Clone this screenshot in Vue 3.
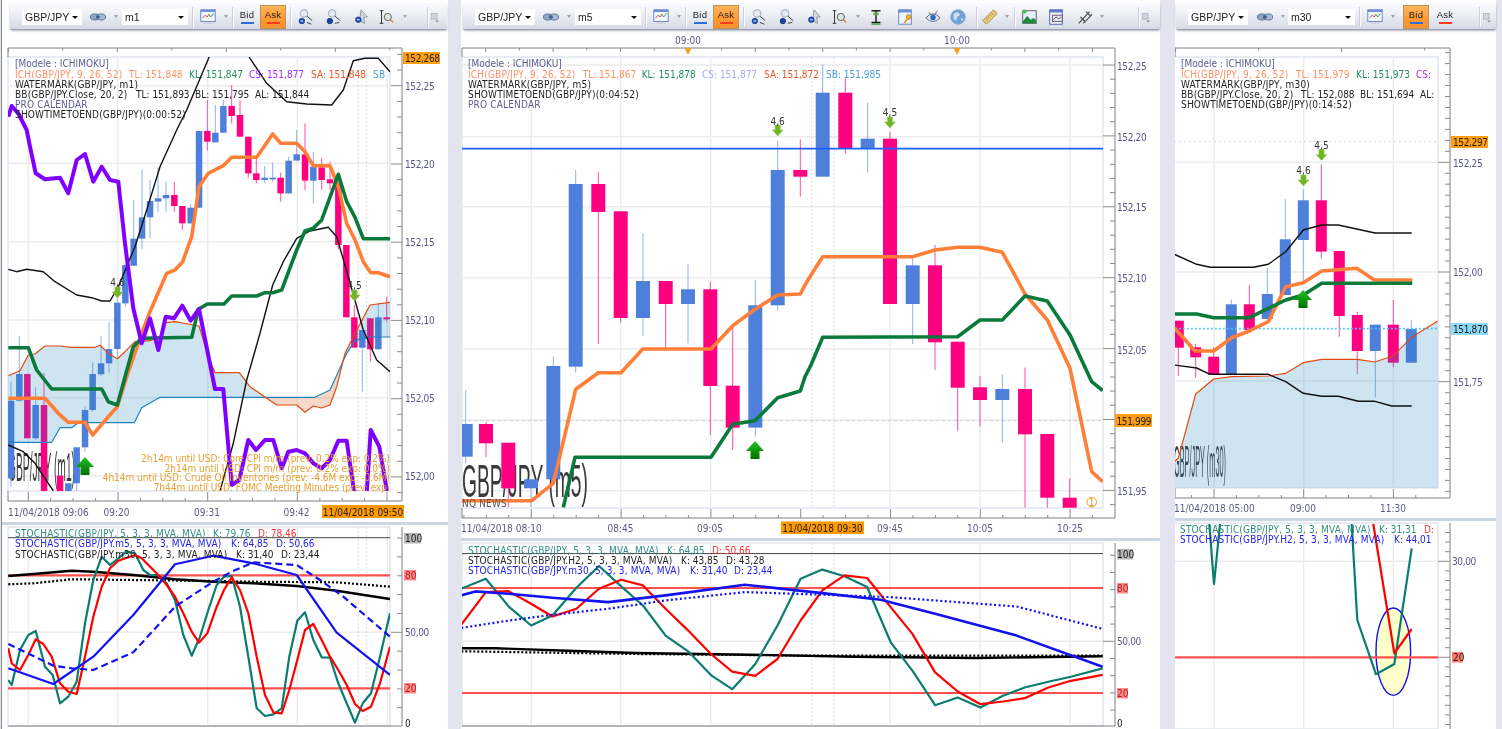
<script setup>
const parse = (s) => s.trim().split(/\s+/).map((t) => t.split(',').map(Number))
const Z = (ox, oy, sx = 3, sy = 3) => (s) => parse(s).map(([x, y]) => [ox + x / sx, oy + y / sy])
const pts = (l) => l.map((p) => p.map((n) => +n.toFixed(1)).join(',')).join(' ')
const z4 = Z(0, 130), z5 = Z(0, 500), z6 = Z(455, 500, 2.208, 2.987), z7 = Z(1160, 500), z8 = Z(1165, 130), z9 = Z(455, 100), z10 = Z(800, 40)

const candles = (list, ox, oy, bw) =>
  list.map(([x, wt, wb, bt, bb, c]) => {
    const cx = ox + x / 3
    return {
      x: +cx.toFixed(1), w1: +(oy + wt / 3).toFixed(1), w2: +(oy + wb / 3).toFixed(1),
      bx: +(cx - bw / 2).toFixed(1), by: +(oy + bt / 3).toFixed(1), bw, bh: +((bb - bt) / 3).toFixed(1),
      fill: c === 'b' ? '#4e7fdb' : '#ff0080', wick: c === 'b' ? '#8fb1ea' : '#ff4aa6',
    }
  })

function yTicks(majors, step, top, bottom, plotR, r) {
  let d = ''
  const m0 = majors[0]
  for (let y = m0 - Math.floor((m0 - top) / step) * step; y <= bottom; y += step) {
    const major = majors.some((m) => Math.abs(m - y) < step / 3)
    d += `M${major ? plotR : r - 5} ${y.toFixed(1)}H${r}`
  }
  return d
}
function xTicks(major0, step, every, l, r, y, majorH = 9, minorH = 3) {
  let d = ''
  const k0 = Math.ceil((l - major0) / step)
  for (let k = k0; major0 + k * step <= r; k++) {
    const x = major0 + k * step
    const mj = ((k % every) + every) % every === 0
    d += `M${x.toFixed(1)} ${y}v${mj ? -majorH : -minorH}`
  }
  return d
}
function topTicks(major0, step, l, r, y) {
  let d = ''
  const k0 = Math.ceil((l - major0) / step)
  for (let k = k0; major0 + k * step <= r; k++) {
    const mj = ((k % 2) + 2) % 2 === 0
    d += `M${(major0 + k * step).toFixed(1)} ${y}v${mj ? 4 : 2.5}`
  }
  return d
}
const hPath = (ys, l, r) => ys.map((y) => `M${l} ${y}H${r}`).join('')
const vPath = (xs, t, b) => xs.map((x) => `M${x} ${t}V${b}`).join('')

const AX = '#5a5a88', O = '#ff9166', G = '#1f8f60', PU = '#9b30ff', R = '#e8582c', B = '#4aa0dc', K = '#222', V = '#5c5c92'
const TE = '#2f8f85', RD = '#ff3030', BL = '#2222ee'

const kind = (t) => (/^\d+h/.test(t) ? 'cal' : /^\d{2,3},\d+$/.test(t) ? 'num' : t.includes('(') || /^[A-Z ]+$/.test(t) ? 'up' : '')
const lab = (x, y, t, c = AX, a = 'start') => ({ x, y, t, c, a, s: kind(t) })

/* ---------- left pane ---------- */
const aCandles = candles([
  [33,755,1070,812,1045,'b'],[58,618,815,732,812,'b'],[82,732,925,732,925,'p'],[107,772,930,825,925,'b'],[132,730,1083,825,1083,'p'],
  [180,1037,1083,1037,1083,'p'],[205,1060,1083,1060,1083,'b'],[230,952,1083,952,1060,'b'],[255,828,965,840,952,'b'],[278,697,845,732,840,'b'],
  [303,617,738,700,733,'b'],[327,577,727,657,700,'b'],[352,470,680,518,657,'b'],[376,400,532,405,520,'b'],[401,210,407,326,407,'b'],
  [426,118,358,262,326,'b'],[450,150,325,213,262,'b'],[474,112,245,205,215,'b'],[498,155,245,195,205,'b'],[523,155,245,195,228,'p'],
  [547,228,300,228,280,'p'],[572,222,280,233,280,'b'],[597,3,233,3,233,'b'],[622,-90,62,3,35,'p'],[646,-75,37,8,37,'b'],[670,-90,8,-72,8,'b'],
  [695,-135,-20,-72,-42,'p'],[720,-90,20,-45,20,'p'],[745,20,143,20,130,'p'],[769,85,160,130,150,'p'],[794,108,160,143,150,'b'],[818,98,155,143,148,'b'],
  [842,128,215,143,190,'p'],[866,80,190,92,190,'b'],[890,0,92,73,92,'b'],[915,-20,180,73,152,'p'],[940,65,220,110,152,'b'],[965,85,180,112,150,'p'],
  [990,95,180,148,160,'p'],[1015,150,358,160,345,'p'],[1039,345,562,345,562,'p'],[1063,525,653,562,653,'p'],[1087,600,785,600,653,'b'],
  [1111,565,695,565,658,'p'],[1135,518,658,562,658,'b'],[1160,500,575,562,568,'p'],
], 0, 130, 6.5)

const aSA = '25,737 60,722 85,675 105,672 135,648 180,648 215,652 285,652 300,646 325,670 352,686 375,665 405,635 450,632 480,620 497,578 525,575 597,588 625,680 645,728 718,728 750,770 800,805 830,825 890,825 915,847 940,828 965,834 990,825 1010,770 1035,670 1060,620 1110,525 1170,517'
const aSB = '25,937 155,937 180,893 215,893 235,878 403,878 425,833 480,802 945,802 990,780 1040,670 1065,632 1110,621 1170,621'

const aMain = {
  vb: '2 30 446 492', cls: 'main', plot: { l: 8, t: 57, r: 390, b: 491 },
  grid: hPath([85.7, 163.3, 241.7, 320, 397.7, 476], 8, 390) + vPath([28.3, 117.7, 207.7, 297.3, 387.3], 57, 491),
  dash: vPath([358.3, 366.7], 57, 491),
  frame: 'M8 57V48H402V501H8V491',
  ticks: yTicks([85.7, 163.3, 241.7, 320, 397.7, 476], 15.65, 52, 498, 391, 402) + xTicks(28.3, 22.42, 4, 8, 402, 501) + topTicks(117.3, 54.5, 8, 402, 48),
  wm: { x: 8, y: 481, w: 67, fs: 40, t: 'GBP/JPY (m1)' },
  candles: aCandles,
  cloud: [
    { pts: pts([...z4(aSA), ...z4(aSB).reverse()]), fill: 'rgba(30,130,190,.22)', clip: 'M0 0H265V729H0ZM340 0H500V729H340Z' },
    { pts: pts([...z4(aSA), ...z4(aSB).reverse()]), fill: 'rgba(220,100,40,.25)', clip: 'M265 0H340V729H265Z' },
  ],
  lines: [
    { p: z4(aSB), c: '#1b85c2', w: 1.2 }, { p: z4(aSA), c: '#e34a10', w: 1.2 },
    { p: z4('25,418 50,425 80,418 130,425 165,455 230,495 275,503 305,513 330,513 355,470 405,350 440,240 480,110 530,0 560,-60 630,-225'), c: '#111', w: 1.4 },
    { p: z4('745,-225 750,-215 800,-140 860,-85 920,-78 995,-75 1030,-120 1060,-208 1095,-215 1135,-215 1170,-175'), c: '#111', w: 1.4 },
    { p: z4('25,945 70,965 105,1000 160,1083'), c: '#111', w: 1.4 },
    { p: z4('660,1083 700,940 740,750 780,610 818,465 850,395 890,325 930,303 985,292 1010,320 1045,440 1090,600 1130,690 1170,725'), c: '#111', w: 1.4 },
    { p: z4('25,805 135,805 175,850 205,877 255,877 278,915 325,860 352,830 380,740 425,610 450,545 500,430 525,420 548,395 575,320 597,170 625,130 670,107 695,82 770,82 818,12 842,40 890,40 915,65 940,107 990,107 1015,170 1040,280 1065,330 1090,395 1112,428 1135,428 1170,440'), c: '#ff7f38', w: 3.6 },
    { p: z4('25,653 85,653 110,720 155,777 305,777 325,815 352,825 400,650 425,625 575,622 595,538 622,522 672,522 695,498 770,498 795,488 818,488 845,480 890,360 915,303 940,295 965,270 1015,133 1040,215 1065,262 1090,326 1170,326'), c: '#0a7a3a', w: 3.6 },
    { p: z4('25,-40 35,-72 55,-50 80,0 90,50 107,130 135,148 180,143 205,190 230,90 255,72 280,155 305,110 330,150 355,155 375,340 400,535 425,640 450,565 475,660 497,560 522,565 547,527 572,572 597,537 645,777 670,777 695,1065 718,1050 745,930 768,960 795,930 820,930 845,1015 865,965 890,960 915,970 940,1000 965,1015 990,990 1015,932 1040,932 1063,1090'), c: '#8000ff', w: 4 },
    { p: z4('1100,1090 1112,900 1138,950 1162,1090'), c: '#8000ff', w: 4 },
  ],
  bigArrows: [[85, 457]],
  smallArrows: [[117.5, 287], [354.5, 290]],
  boxes: [
    { x: 403, y: 52, w: 37, h: 12, fill: '#ff9f10' },
    { x: 322, y: 505, w: 82, h: 13, fill: '#ff9900' },
  ],
  texts: [
    lab(15, 63.5, '[Modele : ICHIMOKU]', V),
    lab(15, 74, 'ICH(GBP/JPY, 9, 26, 52)', O), lab(129, 74, 'TL: 151,848', O), lab(189, 74, 'KL: 151,847', G), lab(249, 74, 'CS: 151,877', PU), lab(311, 74, 'SA: 151,848', R), lab(373, 74, 'SB', B),
    lab(15, 84, 'WATERMARK(GBP/JPY, m1)', K),
    lab(15, 94, 'BB(GBP/JPY.Close, 20, 2)', K), lab(136, 94, 'TL: 151,893', K), lab(195, 94, 'BL: 151,795', K), lab(255, 94, 'AL: 151,844', K),
    lab(15, 104, 'PRO CALENDAR', V),
    lab(15, 114, 'SHOWTIMETOEND(GBP/JPY)(0:00:52)', K),
    lab(117.5, 282.5, '4,6', '#333', 'middle'), lab(354.5, 285.5, '4,5', '#333', 'middle'),
    lab(390, 458.5, '2h14m until USD: Core CPI m/m (prev: 0.2% exp: 0.2%)', '#e8a030', 'end'),
    lab(390, 468, '2h14m until USD: CPI m/m (prev: 0.2% exp: 0.0%)', '#e8a030', 'end'),
    lab(390, 477.5, '4h14m until USD: Crude Oil Inventories (prev: -4.6M exp: -0.6M)', '#e8a030', 'end'),
    lab(390, 487, '7h44m until USD: FOMC Meeting Minutes (prev: exp:', '#e8a030', 'end'),
    lab(405, 58, '152,268', '#222'), lab(405, 86, '152,25'), lab(405, 164, '152,20'), lab(405, 242, '152,15'), lab(405, 320.5, '152,10'), lab(405, 398, '152,05'), lab(405, 476, '152,00'),
    lab(8, 512, '11/04/2018 09:06'), lab(116.5, 512, '09:20', AX, 'middle'), lab(207, 512, '09:31', AX, 'middle'), lab(296.5, 512, '09:42', AX, 'middle'),
    lab(363, 512, '11/04/2018 09:50', '#222', 'middle'),
  ],
}

const aSub = {
  vb: '2 525 446 204', cls: 'sub', plot: { l: 8, t: 527, r: 390, b: 726 },
  grid: hPath([632.3], 8, 390) + vPath([28.3, 117.7, 207.7, 297.3, 387.3], 527, 726),
  dash: vPath([358.3, 366.7], 527, 726),
  frame: 'M402 527V726M8 726H402',
  ticks: yTicks([632.3], 18.85, 530, 726, 391, 402),
  hl: [
    { y: 537.7, c: '#444', w: 1 }, { y: 575.3, c: '#ff5050', w: 2.2 }, { y: 688.3, c: '#ff5050', w: 2.2 },
  ],
  lines: [
    { p: z5('25,228 100,222 215,212 280,215 400,225 525,238 640,245 760,250 890,258 1010,272 1170,297'), c: '#000', w: 2.4 },
    { p: z5('25,253 100,250 215,238 400,240 640,243 760,245 1010,247 1170,260'), c: '#000', w: 2.2, dash: '2 2' },
    { p: z5('25,540 35,555 60,450 85,405 107,393 135,500 158,525 180,610 205,590 230,545 255,370 280,240 305,170 330,195 355,175 378,155 405,160 430,210 450,225 475,225 500,250 525,300 550,405 575,467 600,410 625,330 650,255 672,230 695,228 720,320 745,470 770,625 795,648 820,643 845,625 868,470 892,362 915,337 940,420 965,472 990,473 1015,550 1040,610 1065,668 1088,610 1113,580 1140,470 1170,340'), c: '#0b7d70', w: 2.2 },
    { p: z5('25,445 35,490 60,510 85,465 107,418 130,432 155,470 180,550 205,575 230,582 255,470 280,350 305,260 330,205 355,182 405,165 425,175 475,225 500,255 525,290 550,340 575,395 597,428 622,400 650,320 672,270 695,232 720,270 745,340 770,470 795,585 820,637 845,640 868,570 892,480 915,390 940,372 965,420 990,470 1015,510 1040,555 1065,612 1088,633 1113,620 1140,550 1170,440'), c: '#ff0000', w: 2.2 },
    { p: z5('25,505 160,552 280,470 400,345 525,193 640,167 760,190 890,225 1010,398 1170,525'), c: '#1212f0', w: 2.2 },
    { p: z5('25,432 160,497 215,505 280,510 400,457 525,320 640,245 695,215 760,187 890,195 960,240 1030,290 1170,410'), c: '#1212f0', w: 2.2, dash: '7 4' },
  ],
  boxes: [
    { x: 404, y: 533, w: 17, h: 10.5, fill: '#b5b5b5' },
    { x: 404, y: 570, w: 12, h: 10.5, fill: '#ff8a8a' },
    { x: 404, y: 683, w: 12, h: 10.5, fill: '#ff8a8a' },
  ],
  texts: [
    lab(15, 533, 'STOCHASTIC(GBP/JPY, 5, 3, 3, MVA, MVA)', TE), lab(213, 533, 'K: 79,76', TE), lab(258, 533, 'D: 78,46', RD),
    lab(15, 543.7, 'STOCHASTIC(GBP/JPY.m5, 5, 3, 3, MVA, MVA)', BL), lab(231, 543.7, 'K: 64,85', BL), lab(276, 543.7, 'D: 50,66', BL),
    lab(15, 554, 'STOCHASTIC(GBP/JPY.m30, 5, 3, 3, MVA, MVA)', K), lab(236, 554, 'K: 31,40', K), lab(281, 554, 'D: 23,44', K),
    lab(405, 538, '100', '#222'), lab(405, 575.5, '80', '#b02020'), lab(405, 632.5, '50,00'), lab(405, 688.5, '20', '#b02020'), lab(405, 723, '0', '#222'),
  ],
}

/* ---------- middle pane ---------- */
const bCandles = [
  ...candles([
    [32,870,1090,972,1070,'b'],[93,965,1072,972,1030,'p'],[160,1028,1222,1028,1165,'p'],[228,1138,1222,1138,1165,'b'],[295,770,1138,798,1138,'b'],
    [362,210,818,252,800,'b'],[430,216,732,252,336,'p'],[497,334,668,334,654,'p'],[564,400,708,543,654,'b'],[632,543,745,543,612,'p'],
    [699,493,730,568,612,'b'],[766,545,1005,568,858,'p'],[833,680,1050,857,983,'p'],[901,540,1010,616,983,'b'],[968,122,632,210,616,'b'],[1036,118,290,210,230,'p'],
  ], 455, 100, 14),
  ...candles([
    [68,72,410,158,410,'b'],[136,115,342,158,325,'p'],[203,188,398,296,325,'b'],[270,275,792,296,792,'p'],[338,655,912,676,792,'b'],[405,615,990,676,907,'p'],
    [473,905,1172,905,1043,'p'],[540,1008,1160,1042,1080,'p'],[607,1003,1208,1047,1080,'b'],[675,983,1403,1047,1183,'p'],[742,1182,1403,1182,1373,'p'],[809,1316,1403,1373,1403,'p'],
  ], 800, 40, 14),
]
const bGridY = [65, 136.7, 206.7, 277.7, 349, 420, 490.7]
const bGridX = [531.3, 620.7, 710.7, 890, 980, 1070]
const bMain = {
  vb: '461 30 699 508', cls: 'main', plot: { l: 462, t: 57, r: 1103, b: 508 },
  grid: hPath(bGridY, 462, 1103) + vPath(bGridX, 57, 508),
  dash: vPath([811.7, 834], 57, 508),
  frame: 'M462 57V48H1115V518H462V508',
  ticks: yTicks(bGridY, 14.18, 52, 515, 1103, 1115) + xTicks(531.3, 22.45, 4, 462, 1103, 518) + topTicks(485.7, 33.7, 462, 1115, 48),
  hl: [{ y: 420.7, c: '#cfcfcf', w: 1, dash: '3 3' }],
  wm: { x: 462, y: 497, w: 126, fs: 46, t: 'GBP/JPY (m5)' },
  candles: bCandles,
  lines: [
    { p: [[462, 148.7], [1103, 148.7]], c: '#1f5fff', w: 1.8 },
    { p: [...z9('20,1202 230,1202 295,1150 362,868 430,818 498,818 563,747 768,747 833,677 900,628 968,585 1036,582 1050,555'), ...z10('33,705 68,650 338,650 405,630 473,622 540,622 607,637 675,762 742,840 810,985 875,1295 908,1325')], c: '#ff7f38', w: 3.6 },
    { p: [...z9('325,1222 360,1072 768,1072 833,973 900,962 968,893 1036,873 1050,830'), ...z10('33,975 68,892 473,890 540,840 607,840 675,768 742,783 810,885 875,1025 908,1052')], c: '#0a7a3a', w: 3.6 },
  ],
  bigArrows: [[755, 441]],
  smallArrows: [[777.7, 125], [890, 117]],
  tris: [688, 957],
  circle: { x: 1091.7, y: 502 },
  boxes: [
    { x: 1115, y: 414, w: 37, h: 13, fill: '#ff9f10' },
    { x: 781, y: 521.5, w: 83, h: 12.5, fill: '#ff9900' },
  ],
  texts: [
    lab(688, 40, '09:00', AX, 'middle'), lab(957, 40, '10:00', AX, 'middle'),
    lab(468, 63.5, '[Modele : ICHIMOKU]', V),
    lab(468, 74, 'ICH(GBP/JPY, 9, 26, 52)', O), lab(582.7, 74, 'TL: 151,867', O), lab(641.7, 74, 'KL: 151,878', G), lab(702, 74, 'CS: 151,877', '#a9a9f5'), lab(764, 74, 'SA: 151,872', R), lab(826, 74, 'SB: 151,985', B),
    lab(468, 84, 'WATERMARK(GBP/JPY, m5)', K),
    lab(468, 94, 'SHOWTIMETOEND(GBP/JPY)(0:04:52)', K),
    lab(468, 104, 'PRO CALENDAR', V),
    lab(777.7, 121.5, '4,6', '#333', 'middle'), lab(890, 112, '4,5', '#333', 'middle'),
    lab(462, 503, 'NQ NEWS', '#555'),
    lab(1117, 66, '152,25'), lab(1117, 137, '152,20'), lab(1117, 207.5, '152,15'), lab(1117, 278.5, '152,10'), lab(1117, 350, '152,05'), lab(1116.5, 421, '151,999', '#222'), lab(1117, 491, '151,95'),
    lab(461, 528, '11/04/2018 08:10'), lab(620.5, 528, '08:45', AX, 'middle'), lab(710, 528, '09:05', AX, 'middle'), lab(822.5, 528, '11/04/2018 09:30', '#222', 'middle'), lab(890, 528, '09:45', AX, 'middle'), lab(980, 528, '10:05', AX, 'middle'), lab(1070, 528, '10:25', AX, 'middle'),
  ],
}
const bSub = {
  vb: '461 541 699 188', cls: 'sub', plot: { l: 462, t: 543, r: 1103, b: 726 },
  grid: hPath([641.3], 462, 1103) + vPath(bGridX, 543, 726),
  dash: vPath([811.7, 834], 543, 726),
  frame: 'M1115 543V726M462 726H1115',
  ticks: yTicks([641.3], 17.2, 546, 726, 1103, 1115),
  hl: [{ y: 553.6, c: '#444', w: 1 }, { y: 588, c: '#ff5050', w: 2.2 }, { y: 693, c: '#ff5050', w: 2.2 }],
  lines: [
    { p: z6('14,443 90,443 250,450 400,457 650,462 880,468 1150,472 1430,467'), c: '#000', w: 2.4 },
    { p: z6('14,452 400,460 800,465 1430,465'), c: '#000', w: 2.2, dash: '2 2' },
    { p: z6('14,265 68,235 120,320 168,375 215,345 268,262 318,197 367,258 415,315 465,405 515,452 565,523 612,565 663,490 712,375 763,235 811,208 860,228 910,260 962,425 1010,510 1060,613 1110,590 1160,620 1210,585 1258,560 1310,543 1360,528 1430,503'), c: '#0b7d70', w: 2.2 },
    { p: z6('14,372 68,275 118,272 168,310 215,348 268,325 318,265 367,238 415,255 465,325 515,390 565,460 612,513 663,525 712,475 763,360 811,270 860,225 910,233 962,320 1010,400 1060,515 1110,572 1160,610 1210,602 1258,592 1310,560 1360,540 1430,522'), c: '#ff0000', w: 2.2 },
    { p: z6('14,382 120,360 215,343 338,325 465,300 640,275 811,283 960,290 1240,318 1430,385'), c: '#1212f0', w: 2.2, dash: '2 2.5' },
    { p: z6('14,285 45,273 118,280 215,292 338,305 465,285 640,253 811,278 940,298 1060,340 1240,405 1430,498'), c: '#1212f0', w: 2.6 },
  ],
  boxes: [
    { x: 1117, y: 549, w: 16, h: 10.5, fill: '#b5b5b5' },
    { x: 1117, y: 583, w: 11, h: 10.5, fill: '#ff8a8a' },
    { x: 1117, y: 688, w: 11, h: 10.5, fill: '#ff8a8a' },
  ],
  texts: [
    lab(468, 550, 'STOCHASTIC(GBP/JPY, 5, 3, 3, MVA, MVA)', TE), lab(667, 550, 'K: 64,85', TE), lab(712, 550, 'D: 50,66', RD),
    lab(468, 560, 'STOCHASTIC(GBP/JPY.H2, 5, 3, 3, MVA, MVA)', K), lab(681, 560, 'K: 43,85', K), lab(726, 560, 'D: 43,28', K),
    lab(468, 570, 'STOCHASTIC(GBP/JPY.m30, 5, 3, 3, MVA, MVA)', BL), lab(690, 570, 'K: 31,40', BL), lab(734, 570, 'D: 23,44', BL),
    lab(1117, 554, '100', '#222'), lab(1117, 588.5, '80', '#b02020'), lab(1117, 641.5, '50,00'), lab(1117, 693.5, '20', '#b02020'), lab(1117, 723, '0', '#222'),
  ],
}

/* ---------- right pane ---------- */
const cSA = '28,995 40,985 92,792 146,747 200,740 310,738 362,730 415,698 470,688 577,688 630,696 685,677 740,622 818,573'
const cGridY = [162.3, 272, 381]
const cGridX = [1214, 1303.7, 1393.3]
const cMain = {
  vb: '1175 30 321 488', cls: 'main', plot: { l: 1174, t: 57, r: 1438, b: 488 },
  grid: hPath(cGridY, 1174, 1438) + vPath(cGridX, 57, 488),
  frame: 'M1175 57V48H1450V498H1175V488',
  ticks: yTicks(cGridY, 10.97, 52, 495, 1438, 1450) + xTicks(1214, 22.42, 4, 1174, 1438, 498) + topTicks(1341.6, 83, 1175, 1450, 48),
  hl: [{ y: 141.7, c: '#d8d8d8', w: 1, dash: '2 3' }],
  wm: { x: 1174, y: 477, w: 52, fs: 44, t: 'GBP/JPY (m30)' },
  candles: candles([
    [40,572,738,572,653,'p'],[92,642,743,652,682,'p'],[146,652,735,680,735,'p'],[199,508,735,523,735,'b'],[253,465,600,523,600,'p'],[307,413,567,492,567,'b'],
    [361,208,495,328,495,'b'],[415,178,455,211,330,'b'],[469,103,386,211,365,'p'],[523,363,620,363,558,'p'],[577,545,732,555,663,'p'],[631,584,802,584,663,'b'],[685,510,712,584,698,'p'],[739,570,698,597,698,'b'],
  ], 1165, 130, 11),
  cloud: [{ pts: pts([...z8(cSA), ...z8('818,1073 28,1073')]), fill: 'rgba(30,130,190,.22)' }],
  lines: [
    { p: [[1175, 328.7], [1438, 328.7]], c: '#4fc3ff', w: 1.8, dash: '1.8 2.2' },
    { p: z8(cSA), c: '#e34a10', w: 1.2 },
    { p: z8('28,373 95,403 135,412 265,412 310,403 362,365 415,300 470,285 520,285 630,309 740,309'), c: '#111', w: 1.4 },
    { p: z8('28,705 95,714 135,733 310,733 362,755 415,790 470,799 520,799 580,814 630,814 680,828 740,828'), c: '#111', w: 1.4 },
    { p: z8('28,593 90,663 146,663 200,623 253,603 310,575 362,470 415,458 470,423 575,415 628,450 742,450'), c: '#ff7f38', w: 3.6 },
    { p: z8('28,552 95,552 146,563 253,563 310,535 362,510 415,495 470,460 742,460'), c: '#0a7a3a', w: 3.6 },
  ],
  bigArrows: [[1303, 290]],
  smallArrows: [[1303.5, 175], [1321.5, 149.5]],
  boxes: [
    { x: 1451, y: 136, w: 37, h: 12, fill: '#ff9f10' },
    { x: 1451, y: 323, w: 37, h: 12, fill: '#8edbff' },
  ],
  texts: [
    lab(1181, 63.5, '[Modele : ICHIMOKU]', V),
    lab(1181, 74, 'ICH(GBP/JPY, 9, 26, 52)', O), lab(1296, 74, 'TL: 151,979', O), lab(1356, 74, 'KL: 151,973', G), lab(1416, 74, 'CS:', PU),
    lab(1181, 84, 'WATERMARK(GBP/JPY, m30)', K),
    lab(1181, 94, 'BB(GBP/JPY.Close, 20, 2)', K), lab(1301, 94, 'TL: 152,088', K), lab(1360, 94, 'BL: 151,694', K), lab(1420, 94, 'AL:', K),
    lab(1181, 104, 'SHOWTIMETOEND(GBP/JPY)(0:14:52)', K),
    lab(1303.5, 170, '4,6', '#333', 'middle'), lab(1321.5, 145, '4,5', '#333', 'middle'),
    lab(1453, 142, '152,297', '#222'), lab(1453, 163, '152,25'), lab(1453, 272.5, '152,00'), lab(1453, 329, '151,870', '#222'), lab(1453, 382, '151,75'),
    lab(1174, 508, '11/04/2018 05:00'), lab(1303, 508, '09:00', AX, 'middle'), lab(1393, 508, '11:30', AX, 'middle'),
  ],
}
const cSub = {
  vb: '1175 521 321 208', cls: 'sub', plot: { l: 1174, t: 523, r: 1438, b: 729 },
  grid: hPath([561.3], 1174, 1438) + vPath(cGridX, 523, 729),
  frame: 'M1450 523V729',
  ticks: yTicks([561.3, 657.3], 9.6, 526, 729, 1438, 1450),
  ell: { x: 1393.3, y: 651.7, rx: 17.3, ry: 43.7 },
  hl: [{ y: 657.3, c: '#ff5050', w: 2.2 }],
  lines: [
    { p: z7('148,72 162,252 180,72'), c: '#0b7d70', w: 2.2 },
    { p: z7('575,72 592,360 648,523 703,492 755,145'), c: '#0b7d70', w: 2.2 },
    { p: z7('640,72 703,460 755,387'), c: '#ff0000', w: 2.2 },
  ],
  boxes: [{ x: 1452, y: 652, w: 11, h: 10.5, fill: '#ff7a6a' }],
  texts: [
    lab(1180, 529.3, 'STOCHASTIC(GBP/JPY, 5, 3, 3, MVA, MVA)', TE), lab(1379, 529.3, 'K: 31,31', TE), lab(1424, 529.3, 'D:', RD),
    lab(1180, 539.3, 'STOCHASTIC(GBP/JPY.H2, 5, 3, 3, MVA, MVA)', BL), lab(1394, 539.3, 'K: 44,01', BL),
    lab(1452, 561.5, '30,00'), lab(1453, 657.5, '20', '#222'),
  ],
}

/* ---------- toolbars ---------- */
const sp = (w) => ({ k: 'sp', w })
const sep = { k: 'sep' }
const ic = (n, w = 24) => ({ k: 'ic', n, w })
const ar = (w = 12) => ({ k: 'ar', w })
const combo = (t, w) => ({ k: 'combo', t, w })
const btn = (t, line, on) => ({ k: 'btn', t, line, on })
const head = (tf) => [sp(12), combo('GBP/JPY', 60), sp(4), ic('link'), ar(), combo(tf, 66), sp(4), sep, sp(3), ic('chart'), ar(), sep, sp(1), btn('Bid', '#2a6fe0', false), btn('Ask', '#ff3a20', true), sp(4), sep]
const zooms = [ic('zoomA', 28), ic('zoomB', 28), ic('zoomC', 28), ic('zoomD', 22), sp(2), ar()]

const panels = [
  { id: 'a', panes: [aMain, aSub], tools: [...head('m1'), ...zooms, sp(16), sep, ic('pin', 14)] },
  { id: 'b', panes: [bMain, bSub], tools: [...head('m5'), ...zooms, ic('ibeam'), sp(3), ic('doc', 28), ic('eye', 28), ic('globe', 22), sp(7), sep, sp(1), ic('ruler'), ar(10), sp(2), sep, sp(2), ic('pic'), sp(3), ic('win'), sp(5), ic('fork'), ar(10), sp(31), sep, ic('pin', 14)] },
  { id: 'c', panes: [cMain, cSub], tools: [sp(12), combo('GBP/JPY', 60), sp(5), ic('link'), ar(11), combo('m30', 67), sp(4), sep, sp(3), ic('chart'), ar(), sp(4), btn('Bid', '#2a6fe0', true), sp(3), btn('Ask', '#ff3a20', false), sp(21), sep, ic('pin', 14)] },
]
</script>

<template>
  <div class="app">
    <svg class="defs" aria-hidden="true">
      <symbol id="i-link" viewBox="0 0 20 20"><ellipse cx="6.5" cy="10" rx="5" ry="3.4" fill="#8fa6c2" stroke="#4f6f98" /><ellipse cx="13.5" cy="10" rx="5" ry="3.4" fill="#a8bbd2" stroke="#4f6f98" /><ellipse cx="10" cy="10" rx="2.2" ry="2" fill="#3e5f8c" /></symbol>
      <symbol id="i-chart" viewBox="0 0 20 20"><rect x="2" y="2" width="16" height="13" fill="#f2f6fd" stroke="#5f7ec8" /><rect x="2" y="2" width="16" height="2.4" fill="#6f8fd8" /><path d="M4 11l3-3 2 2 2-3" fill="none" stroke="#d03030" /><path d="M11 7l2 3 3-4" fill="none" stroke="#2f9a40" /><path d="M5 17h10" stroke="#c4c8d4" /></symbol>
      <symbol id="i-zoomA" viewBox="0 0 20 20"><circle cx="9" cy="6" r="4.2" fill="#e6eaf2" stroke="#9aa4b8" /><path d="M12 9l6 5" stroke="#333" /><circle cx="6.5" cy="14.5" r="3" fill="#2255cc" stroke="#123a90" /><path d="M5 14.5h3" stroke="#fff" /><path d="M12 16l5 2" stroke="#333" /></symbol>
      <symbol id="i-zoomB" viewBox="0 0 20 20"><circle cx="9" cy="6" r="4.2" fill="#e6eaf2" stroke="#9aa4b8" /><path d="M12 9l6 5" stroke="#333" /><circle cx="6.5" cy="14.5" r="3" fill="#1a3fa0" stroke="#123a90" /><path d="M12 17l5-1" stroke="#333" /></symbol>
      <symbol id="i-zoomC" viewBox="0 0 20 20"><path d="M10 2l7 8-4 0 1 7-3-1-2-6z" fill="#d4d8e0" stroke="#8b92a2" /><circle cx="7" cy="13" r="3" fill="#2255cc" stroke="#123a90" /><path d="M5.6 13h3" stroke="#fff" /></symbol>
      <symbol id="i-zoomD" viewBox="0 0 20 20"><path d="M3 3h4M5 3v14M3 17h4" stroke="#222" fill="none" /><circle cx="12" cy="10" r="4" fill="#dbe8d8" stroke="#555" /><path d="M15 13l3 3" stroke="#d09030" stroke-width="1.6" /></symbol>
      <symbol id="i-ibeam" viewBox="0 0 20 20"><path d="M5 3h10M10 3v13M5 16h10" stroke="#1a1a1a" stroke-width="1.6" fill="none" /><path d="M7 5h6v3H7z" fill="#5fb040" /><path d="M5 17h10v1.5H5z" fill="#2f8a30" /></symbol>
      <symbol id="i-doc" viewBox="0 0 20 20"><rect x="3" y="2" width="14" height="16" fill="#eef3fc" stroke="#5f7ec8" /><rect x="3" y="2" width="14" height="3" fill="#6f8fd8" /><path d="M9 17l4-5" stroke="#e8a020" stroke-width="2" /><circle cx="14" cy="10" r="2.6" fill="#f2b824" stroke="#c48010" /></symbol>
      <symbol id="i-eye" viewBox="0 0 20 20"><path d="M2 11q8-9 16 0q-8 8-16 0z" fill="#dfe8f4" stroke="#55627c" /><circle cx="10" cy="10.5" r="3" fill="#2f66b8" /><path d="M5 5l3 2M15 3l-3 4" stroke="#667" /></symbol>
      <symbol id="i-globe" viewBox="0 0 20 20"><circle cx="10" cy="10" r="8" fill="#6ea4dc" stroke="#7f9cc0" /><path d="M5 7q3-3 6-2l1 3-3 2-1 4-3-2z" fill="#cfe0f2" /><path d="M13 12l3-1-1 4z" fill="#cfe0f2" /></symbol>
      <symbol id="i-ruler" viewBox="0 0 20 20"><path d="M14 2l4 4L6 18l-4-4z" fill="#e6c878" stroke="#a88a40" /><path d="M12 6l1 1M10 8l1 1M8 10l1 1M6 12l1 1" stroke="#806020" /></symbol>
      <symbol id="i-pic" viewBox="0 0 20 20"><rect x="3" y="3" width="15" height="14" fill="#e4f0fb" stroke="#556" /><path d="M3 15l5-6 4 4 3-2 3 3v3H3z" fill="#1f8a3c" /><circle cx="5" cy="4" r="2.4" fill="#4ec04e" /></symbol>
      <symbol id="i-win" viewBox="0 0 20 20"><rect x="3" y="2" width="14" height="16" fill="#f2f4fa" stroke="#3f5f9f" /><rect x="3" y="2" width="14" height="3" fill="#5f7ec8" /><rect x="6" y="8" width="11" height="7" fill="#e6e6ee" stroke="#5a5a70" /><path d="M7 13l3-3 3 2 3-2" fill="none" stroke="#555" /></symbol>
      <symbol id="i-fork" viewBox="0 0 20 20"><path d="M3 17L15 4M8 17L18 7M5 10l5 5M11 4l5 5" fill="none" stroke="#444" stroke-width="1.2" /></symbol>
      <symbol id="i-pin" viewBox="0 0 20 20"><rect x="5" y="5" width="8" height="8" fill="#d2d5de" stroke="#aab" /><path d="M10 15h6l-3 3z" fill="#8b8f9c" /></symbol>
    </svg>

    <section v-for="p in panels" :key="p.id" class="panel" :class="'panel-' + p.id">
      <div class="toolbar">
        <template v-for="(it, i) in p.tools" :key="i">
          <span v-if="it.k === 'sp'" class="sp" :style="{ width: it.w + 'px' }"></span>
          <span v-else-if="it.k === 'sep'" class="tsep"></span>
          <span v-else-if="it.k === 'combo'" class="combo" :style="{ width: it.w + 'px' }"><span>{{ it.t }}</span><i class="drop"></i></span>
          <span v-else-if="it.k === 'ar'" class="arrowlet" :style="{ width: it.w + 'px' }"><i></i></span>
          <span v-else-if="it.k === 'ic'" class="ticon" :style="{ width: it.w + 'px' }"><svg width="18" height="18"><use :href="'#i-' + it.n" /></svg></span>
          <span v-else class="tbtn" :class="{ on: it.on }"><span>{{ it.t }}</span><i :style="{ background: it.line }"></i></span>
        </template>
      </div>

      <template v-for="(g, gi) in p.panes" :key="gi">
        <div v-if="gi" class="sep"></div>
        <svg class="pane" :class="g.cls" :viewBox="g.vb">
          <defs>
            <clipPath :id="`clip-${p.id}-${gi}`"><rect :x="g.plot.l" :y="g.plot.t" :width="g.plot.r - g.plot.l" :height="g.plot.b - g.plot.t" /></clipPath>
            <linearGradient :id="`bigg-${p.id}-${gi}`" x1="0" y1="0" x2="0" y2="1"><stop offset="0" stop-color="#22c322" /><stop offset="1" stop-color="#007000" /></linearGradient>
            <clipPath :id="`cl1-${p.id}-${gi}`"><path v-if="g.cloud && g.cloud[0].clip" :d="g.cloud[0].clip" /></clipPath>
            <clipPath :id="`cl2-${p.id}-${gi}`"><path v-if="g.cloud && g.cloud[1]" :d="g.cloud[1].clip" /></clipPath>
          </defs>

          <rect class="plotbox" :x="g.plot.l" :y="g.plot.t" :width="g.plot.r - g.plot.l" :height="g.plot.b - g.plot.t" />
          <path class="grid" :d="g.grid" />
          <path v-if="g.dash" class="dashv" :d="g.dash" />

          <g :clip-path="`url(#clip-${p.id}-${gi})`">
            <text v-if="g.wm" class="wm" :x="g.wm.x" :y="g.wm.y" :font-size="g.wm.fs" :textLength="g.wm.w" lengthAdjust="spacingAndGlyphs">{{ g.wm.t }}</text>
            <ellipse v-if="g.ell" :cx="g.ell.x" :cy="g.ell.y" :rx="g.ell.rx" :ry="g.ell.ry" fill="#ffffcc" stroke="#1212e0" stroke-width="1.4" />
            <line v-for="(h, i) in g.hl" :key="'h' + i" :x1="g.plot.l" :x2="g.plot.r" :y1="h.y" :y2="h.y" :stroke="h.c" :stroke-width="h.w" :stroke-dasharray="h.dash" />
            <g v-for="(c, i) in g.candles" :key="'c' + i">
              <line :x1="c.x" :x2="c.x" :y1="c.w1" :y2="c.w2" :stroke="c.wick" />
              <rect :x="c.bx" :y="c.by" :width="c.bw" :height="c.bh" :fill="c.fill" />
            </g>
            <polygon v-for="(c, i) in g.cloud" :key="'k' + i" :points="c.pts" :fill="c.fill" :clip-path="c.clip ? `url(#cl${i + 1}-${p.id}-${gi})` : undefined" />
            <polyline v-for="(l, i) in g.lines" :key="'l' + i" :points="pts(l.p)" fill="none" :stroke="l.c" :stroke-width="l.w" :stroke-dasharray="l.dash" stroke-linejoin="round" />
          </g>

          <path class="frame" :d="g.frame" />
          <path class="ticks" :d="g.ticks" />

          <path v-for="t in g.tris" :key="t" :d="`M${t - 3.5} 48h7l-3.5 7z`" fill="#f0a020" />
          <path v-for="(a, i) in g.bigArrows" :key="'b' + i" :d="`M${a[0]} ${a[1]}l9 10h-4.5v8h-9v-8h-4.5z`" :fill="`url(#bigg-${p.id}-${gi})`" />
          <path v-for="(a, i) in g.smallArrows" :key="'s' + i" :d="`M${a[0] - 2.6} ${a[1]}h5.2v5h2.8l-5.4 6-5.4-6h2.8z`" fill="#72b32a" stroke="#9acb5a" stroke-width=".6" />
          <g v-if="g.circle"><circle :cx="g.circle.x" :cy="g.circle.y" r="4.8" fill="none" stroke="#f0a030" /><text class="t" :x="g.circle.x" :y="g.circle.y" text-anchor="middle" fill="#e89a20">1</text></g>

          <rect v-for="(b, i) in g.boxes" :key="'x' + i" :x="b.x" :y="b.y" :width="b.w" :height="b.h" :fill="b.fill" />
          <text v-for="(t, i) in g.texts" :key="'t' + i" class="t" :class="t.s" :x="t.x" :y="t.y" :fill="t.c" :text-anchor="t.a">{{ t.t }}</text>
        </svg>
      </template>
    </section>
  </div>
</template>

<style>
html, body { margin: 0; background: #e3e4ef; overflow: hidden; }
</style>

<style scoped>
.app {
  display: flex; width: 1502px; height: 729px; overflow: hidden; background: #e3e4ef;
  filter: blur(.35px);
  font-family: "DejaVu Sans", "Liberation Sans", sans-serif;
}
.defs { width: 0; height: 0; flex: none; }
.panel { flex: none; background: #fff; padding-top: 4px; height: 725px; display: flex; flex-direction: column; }
.panel-a { width: 446px; margin-left: 1px; border-left: 1px solid #888; }
.panel-b { width: 699px; margin-left: 13px; }
.panel-c { width: 321px; margin-left: 15px; }

.toolbar {
  flex: none; height: 26px; box-sizing: border-box; display: flex; align-items: center;
  background: linear-gradient(#fafbfd, #eceef4 45%, #d6d9e5);
  border-bottom: 1px solid #9ca2b6; border-radius: 2px;
  box-shadow: 0 1px 2px rgba(90, 90, 120, .45);
  font-size: 10px; letter-spacing: 0;
}
.panel-a .toolbar { margin-left: 8px; width: 437px; }
.panel-b .toolbar { margin-left: 2px; width: 697px; }
.panel-c .toolbar { margin-left: 1px; width: 320px; }
.sp { flex: none; height: 1px; }
.tsep { flex: none; width: 1px; height: 20px; background: #cdd0dc; box-shadow: 1px 0 #fff; }
.combo {
  flex: none; box-sizing: border-box; height: 16px; background: #fff; display: flex; align-items: center;
  justify-content: space-between; padding: 0 3px; color: #222; font: 10.5px "Liberation Sans", sans-serif;
}
.drop { width: 0; height: 0; flex: none; border-left: 3.5px solid transparent; border-right: 3.5px solid transparent; border-top: 3.5px solid #111; margin-right: 1px; margin-top: 2px; }
.arrowlet { flex: none; display: flex; align-items: center; justify-content: center; height: 18px; }
.arrowlet i { width: 0; height: 0; border-left: 2.5px solid transparent; border-right: 2.5px solid transparent; border-top: 3px solid #9aa0ae; }
.ticon { flex: none; display: flex; align-items: center; justify-content: center; height: 22px; }
.tbtn {
  flex: none; box-sizing: border-box; width: 26px; height: 24px; display: flex; flex-direction: column; align-items: center; justify-content: center;
  font: 9.5px "Liberation Sans", sans-serif; color: #222; gap: 2px; letter-spacing: .2px;
}
.tbtn i { display: block; width: 13px; height: 1.5px; }
.tbtn.on { background: linear-gradient(#ffb45a, #ff9933 60%, #f79030); border: 1px solid #b8945a; }

.pane { display: block; flex: none; }
.panel-a .main { width: 446px; height: 492px; }
.panel-a .sub { width: 446px; height: 204px; }
.panel-b .main { width: 699px; height: 508px; }
.panel-b .sub { width: 699px; height: 188px; }
.panel-c .main { width: 321px; height: 488px; }
.panel-c .sub { width: 321px; height: 208px; }
.sep { flex: none; height: 3px; background: #cbd6e4; }

.plotbox { fill: #fff; stroke: #dfe6ef; stroke-width: 1.5; }
.grid { fill: none; stroke: #ececec; stroke-width: 1.4; }
.dashv { fill: none; stroke: #dcdcdc; stroke-dasharray: 2 2; }
.frame { fill: none; stroke: #808080; stroke-width: 1; }
.ticks { fill: none; stroke: #8c8c8c; stroke-width: 1; }
.wm { font-family: "Liberation Sans", sans-serif; fill: #3a3a3a; }
.t { font-family: "DejaVu Sans Condensed", "DejaVu Sans", sans-serif; font-stretch: condensed; font-size: 10px; dominant-baseline: central; }
.up { letter-spacing: .17px; }
.num { letter-spacing: -.35px; }
.cal { letter-spacing: -.02px; }
</style>
